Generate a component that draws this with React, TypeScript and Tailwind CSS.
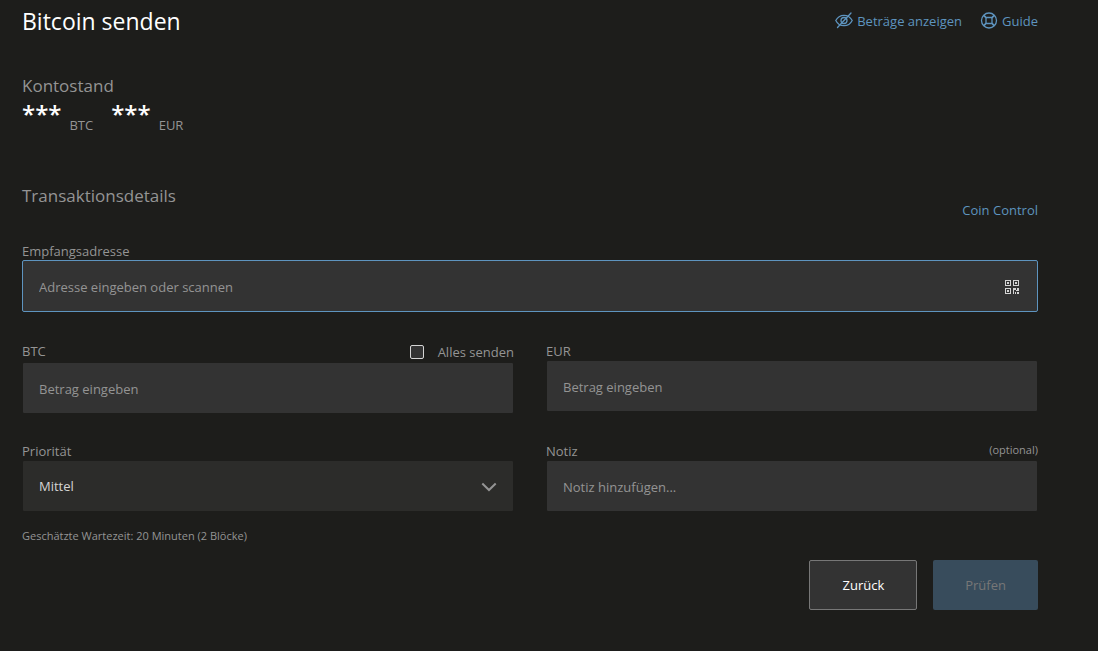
import React from 'react';

interface FieldProps {
  id: string;
  label: string;
  placeholder: string;
  aside?: React.ReactNode;
  autoFocus?: boolean;
  children?: React.ReactNode;
}

const inputClass =
  'block h-13 w-full rounded-xs border border-[#1d1d1b] bg-[#333333] px-4 pt-0.5 text-[13px] text-white placeholder:text-[#949494] placeholder:opacity-100 outline-none focus:border-[#5e94bf]';

const Field = ({ id, label, placeholder, aside, autoFocus, children }: FieldProps) => (
  <div>
    <div className="flex items-start justify-between">
      <label htmlFor={id} className="text-[13px] leading-[18px]">{label}</label>
      {aside}
    </div>
    <div className="relative">
      <input
        id={id}
        type="text"
        placeholder={placeholder}
        autoFocus={autoFocus}
        className={`${inputClass} caret-transparent`}
      />
      {children}
    </div>
  </div>
);

const EyeOffIcon = () => (
  <svg width="18" height="18" viewBox="0 0 18 18" fill="none" stroke="currentColor" strokeWidth="1.3" strokeLinecap="round">
    <path d="M.8 8.500C2.500 5.100 5.500 3.300 9 3.300s6.500 1.800 8.200 5.200c-1.700 3.400-4.700 5.200-8.200 5.200S2.500 11.900.8 8.500z" />
    <circle cx="9" cy="8.500" r="3" />
    <path d="M2.500 15.500L16 1" />
  </svg>
);

const GuideIcon = () => (
  <svg width="18" height="18" viewBox="0 0 18 18" fill="none" stroke="currentColor" strokeWidth="1.3">
    <circle cx="9" cy="8.500" r="7.500" />
    <rect x="6" y="5.500" width="6" height="6" rx="1" />
    <path strokeWidth="1.8" d="M3.800 3.300l2.500 2.500M14.200 3.300l-2.500 2.500M3.800 13.700l2.500-2.500M14.200 13.700l-2.500-2.500" />
  </svg>
);

const QrIcon = () => (
  <svg width="14" height="14" viewBox="0 0 14 14" fill="none" shapeRendering="crispEdges">
    <g stroke="#d4d4d4">
      <rect x=".5" y=".5" width="5" height="5" />
      <rect x="8.500" y=".5" width="5" height="5" />
      <rect x=".5" y="8.500" width="5" height="5" />
    </g>
    <path
      fill="#d4d4d4"
      d="M2 2h2v2H2zM10 2h2v2h-2zM2 10h2v2H2zM8 8h3v2H9v4H8zM12 8h2v3h-3v-1h1zM12 12h2v2h-2zM10 12h1v2h-1z"
    />
  </svg>
);

const Amount = ({ unit }: { unit: string }) => (
  <div className="flex h-9 gap-2">
    <span className="text-2xl leading-7 font-semibold text-white">***</span>
    <span className="self-end text-[13px] leading-[22px]">{unit}</span>
  </div>
);

export default function App() {
  return (
    <div className="min-h-screen bg-[#1d1d1b] pr-[60px] pb-10 pl-[22px] font-['Open_Sans','Noto_Sans',sans-serif] text-[#949494]">
      <header className="flex items-center justify-between pt-[5px]">
        <h1 className="text-[23px] leading-8 text-white">Bitcoin senden</h1>
        <div className="flex gap-[18px] text-[13px] leading-5 text-[#5e94bf]">
          <button type="button" className="flex items-center gap-1">
            <EyeOffIcon />
            Beträge anzeigen
          </button>
          <button type="button" className="flex items-center gap-1">
            <GuideIcon />
            Guide
          </button>
        </div>
      </header>

      <main>
        <section className="pt-[35px]">
          <h2 className="text-[17px] leading-7">Kontostand</h2>
          <div className="flex gap-[18px]">
            <Amount unit="BTC" />
            <Amount unit="EUR" />
          </div>
        </section>

        <form className="pt-[46px]">
          <div className="flex items-start justify-between">
            <h2 className="text-[17px] leading-7">Transaktionsdetails</h2>
            <button type="button" className="mt-[18px] text-[13px] leading-5 text-[#5e94bf]">Coin Control</button>
          </div>

          <div className="mt-[22px]">
            <Field id="address" label="Empfangsadresse" placeholder="Adresse eingeben oder scannen" autoFocus>
              <button type="button" aria-label="QR" className="absolute inset-y-0 right-0 flex items-center px-[19px] pt-0.5">
                <QrIcon />
              </button>
            </Field>
          </div>

          <div className="mt-[30px] grid grid-cols-2 gap-x-8 gap-y-7">
            <Field
              id="btc"
              label="BTC"
              placeholder="Betrag eingeben"
              aside={
                <label className="flex items-center gap-[14px] text-[13px] leading-5">
                  <input type="checkbox" className="size-[14px] appearance-none rounded-xs border border-[#d4d4d4] bg-[#333333] checked:bg-[#5e94bf]" />
                  Alles senden
                </label>
              }
            />
            <Field id="eur" label="EUR" placeholder="Betrag eingeben" />
            <div>
              <label htmlFor="priority" className="block text-[13px] leading-[18px]">Priorität</label>
              <div className="relative">
                <select
                  id="priority"
                  className="block h-13 w-full appearance-none rounded-xs border border-[#1d1d1b] bg-[#2c2c2a] px-4 pt-0.5 text-[13px] text-[#d4d4d4] outline-none"
                >
                  <option>Mittel</option>
                </select>
                <svg
                  className="pointer-events-none absolute top-[18px] right-4 text-[#949494]"
                  width="18"
                  height="18"
                  viewBox="0 0 18 18"
                  fill="none"
                  stroke="currentColor"
                  strokeWidth="2"
                >
                  <path d="M2.300 5.500L9 12l6.700-6.500" />
                </svg>
              </div>
              <p className="mt-4 text-[11px] leading-4">Geschätzte Wartezeit: 20 Minuten (2 Blöcke)</p>
            </div>
            <Field
              id="note"
              label="Notiz"
              placeholder="Notiz hinzufügen..."
              aside={<span className="text-[11px] leading-4">(optional)</span>}
            />
          </div>

          <div className="mt-4 flex justify-end gap-4">
            <button type="button" className="h-[50px] rounded-xs border border-[#777777] bg-[#333333] px-8 pt-0.5 text-[13px] text-white">
              Zurück
            </button>
            <button type="submit" disabled className="h-[50px] rounded-xs bg-[#384c5c] px-8 pt-0.5 text-[13px] text-[#777777]">
              Prüfen
            </button>
          </div>
        </form>
      </main>
    </div>
  );
}
